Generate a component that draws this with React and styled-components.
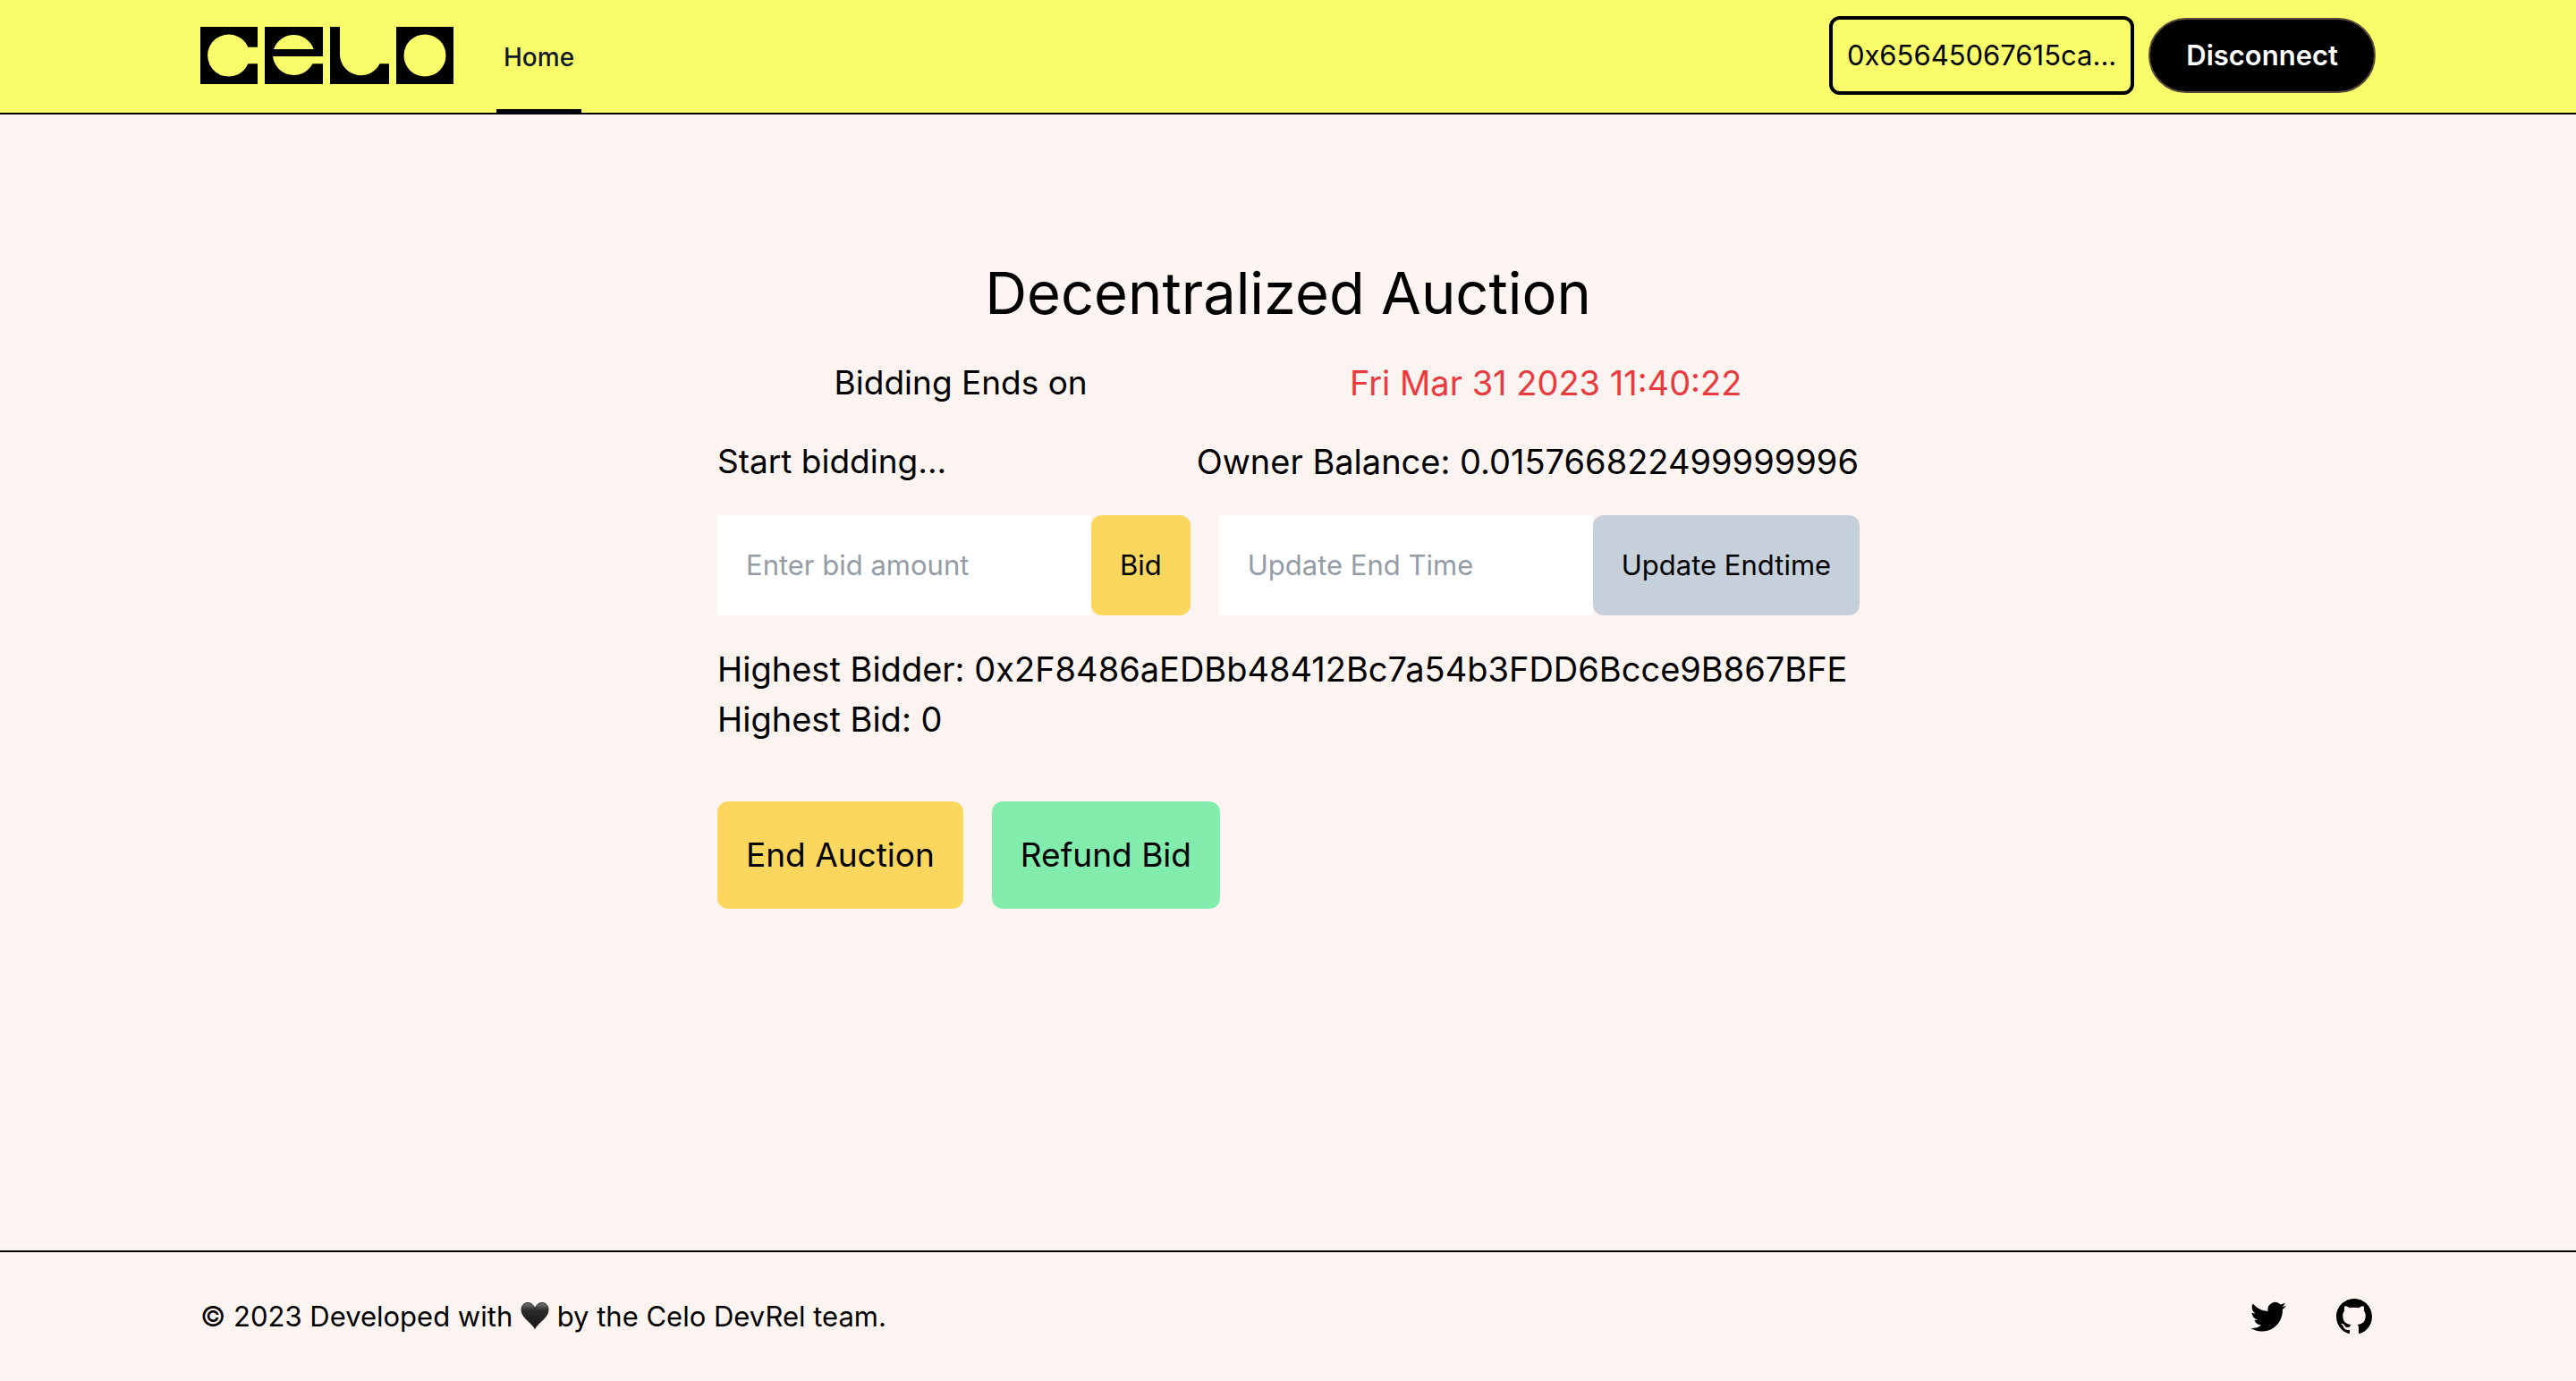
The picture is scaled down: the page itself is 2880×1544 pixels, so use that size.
import React from "react";
import styled, { createGlobalStyle } from "styled-components";

const GlobalStyle = createGlobalStyle`
  *, *::before, *::after { box-sizing: border-box; }
  body {
    margin: 0;
    background: #fcf4f1;
    color: #000;
    font-family: Inter, "Liberation Sans", sans-serif;
    font-size: 31px;
    line-height: 48px;
  }
  h1, p { margin: 0; font-weight: 400; }
  button, input { font: inherit; color: inherit; border: 0; }
  button { cursor: pointer; }
`;

const Page = styled.div`
  display: flex;
  flex-direction: column;
  min-height: 100vh;
`;

const Header = styled.header`
  background: #fafd6a;
  border-bottom: 2px solid #000;
`;

const Container = styled.div`
  display: flex;
  align-items: center;
  justify-content: space-between;
  max-width: 2560px;
  margin: 0 auto;
  padding: ${(p) => p.$padY || 0}px 64px;
`;

const Bar = styled(Container)`
  min-height: 126px;
  padding-bottom: 2px;
`;

const Nav = styled.nav`
  display: flex;
  align-self: stretch;
  align-items: center;
  gap: 48px;
`;

const LogoSvg = styled.svg`
  display: block;
  width: 283px;
  height: 64px;
`;

const NavLink = styled.a`
  display: flex;
  align-items: center;
  align-self: stretch;
  margin-bottom: -4px;
  padding: 6px 8px 0;
  border-bottom: 6px solid #000;
  color: #111827;
  font-size: 28px;
  font-weight: 500;
  line-height: 40px;
  text-decoration: none;
`;

const Wallet = styled.div`
  display: flex;
  align-items: center;
  gap: 16px;
`;

const Address = styled.p`
  padding: 16px;
  border: 4px solid #000;
  border-radius: 12px;
`;

const Disconnect = styled.button`
  padding: 16px 40px;
  border: 2px solid #5b4b3f;
  border-radius: 42px;
  background: #000;
  color: #fff;
  font-weight: 600;
`;

const Main = styled.main`
  flex: 1;
  padding: 160px 64px;
`;

const Auction = styled.section`
  display: flex;
  flex-direction: column;
  gap: 32px;
  max-width: 1276px;
  margin: 0 auto;
  font-size: 37px;
  line-height: 56px;
`;

const Title = styled.h1`
  font-size: 65px;
  line-height: 80px;
  text-align: center;
`;

const Row = styled.div`
  display: flex;
  gap: 32px;
  justify-content: ${(p) => p.$justify || "flex-start"};
`;

const Figure = styled.p`
  color: ${(p) => p.$color || "inherit"};
  font-size: 38px;
`;

const Field = styled.form`
  display: flex;
  flex: 1 1 auto;
  font-size: 31px;
  line-height: 48px;
`;

const Input = styled.input`
  flex: 1 1 auto;
  width: 418px;
  min-width: 0;
  padding: 32px;
  background: #fff;
  border-radius: 0;
  &::placeholder { color: #949ca6; opacity: 1; }
`;

const Button = styled.button`
  padding: 32px;
  border-radius: 12px;
  background: ${(p) => p.$color};
  white-space: nowrap;
`;

const Actions = styled(Row)`
  padding-top: 32px;
`;

const Footer = styled.footer`
  border-top: 2px solid #000;
`;

const Heart = styled.svg`
  display: inline-block;
  width: 32px;
  height: 32px;
  vertical-align: -4px;
`;

const Social = styled.div`
  display: flex;
  gap: 48px;
`;

const SocialLink = styled.a`
  display: block;
  height: 48px;
  color: #000;
  svg { display: block; width: 48px; height: 48px; fill: currentColor; }
`;

function Logo() {
  return (
    <LogoSvg viewBox="0 0 283 64" role="img" aria-label="Celo">
      <path d="M0 0H64V22.7H53.4A23.6 23.6 0 1 0 53.4 41.3H64V64H0Z" />
      <path
        fillRule="evenodd"
        d="M72 0H137V33H81A23.6 23.6 0 0 0 125.4 41.3H137V64H72ZM82 25H126.7A23.6 23.6 0 0 0 82 25Z"
      />
      <path d="M145 0H156V32A23.6 23.6 0 0 0 200.6 41.3H211V64H145Z" />
      <path
        fillRule="evenodd"
        d="M219 0H283V64H219ZM251 8.4A23.5 23.6 0 1 0 251 55.6A23.5 23.6 0 1 0 251 8.4Z"
      />
    </LogoSvg>
  );
}

export default function App() {
  return (
    <Page>
      <GlobalStyle />
      <Header>
        <Bar>
          <Nav>
            <Logo />
            <NavLink href="#">Home</NavLink>
          </Nav>
          <Wallet>
            <Address>0x65645067615ca...</Address>
            <Disconnect type="button">Disconnect</Disconnect>
          </Wallet>
        </Bar>
      </Header>
      <Main>
        <Auction>
          <Title>Decentralized Auction</Title>
          <Row $justify="space-around">
            <p>Bidding Ends on</p>
            <Figure $color="#e93a40">Fri Mar 31 2023 11:40:22</Figure>
          </Row>
          <Row $justify="space-between">
            <p>Start bidding...</p>
            <Figure>Owner Balance: 0.015766822499999996</Figure>
          </Row>
          <Row>
            <Field onSubmit={(e) => e.preventDefault()}>
              <Input type="text" placeholder="Enter bid amount" aria-label="Enter bid amount" />
              <Button $color="#fbd75e">Bid</Button>
            </Field>
            <Field onSubmit={(e) => e.preventDefault()}>
              <Input type="text" placeholder="Update End Time" aria-label="Update End Time" />
              <Button $color="#c6d0da">Update Endtime</Button>
            </Field>
          </Row>
          <div>
            <Figure>Highest Bidder: 0x2F8486aEDBb48412Bc7a54b3FDD6Bcce9B867BFE</Figure>
            <Figure>Highest Bid: 0</Figure>
          </div>
          <Actions>
            <Button type="button" $color="#fbd75e">End Auction</Button>
            <Button type="button" $color="#82ecac">Refund Bid</Button>
          </Actions>
        </Auction>
      </Main>
      <Footer>
        <Container $padY={48}>
          <p>
            © 2023 Developed with{" "}
            <Heart viewBox="0 0 32 32" role="img" aria-label="love">
              <defs>
                <linearGradient id="heartShade" x1="0" y1="0" x2="0" y2="1">
                  <stop offset="0" stopColor="#777" />
                  <stop offset="0.3" stopColor="#2b2b2b" />
                  <stop offset="1" stopColor="#151515" />
                </linearGradient>
              </defs>
              <path
                fill="url(#heartShade)"
                stroke="#222"
                d="M16 30.5C13.500 24.500 1 18.500 1 9.500C1 4.500 4 1.500 8 1.500C12 1.500 15 4.500 16 8.500C17 4.500 20 1.500 24 1.500C28 1.500 31 4.500 31 9.500C31 18.500 18.500 24.500 16 30.500Z"
              />
            </Heart>{" "}
            by the Celo DevRel team.
          </p>
          <Social>
            <SocialLink href="#" aria-label="Twitter">
              <svg viewBox="0 0 24 24" aria-hidden="true">
                <path d="M8.29 20.251c7.547 0 11.675-6.253 11.675-11.675 0-.178 0-.355-.012-.53A8.348 8.348 0 0022 5.92a8.19 8.19 0 01-2.357.646 4.118 4.118 0 001.804-2.27 8.224 8.224 0 01-2.605.996 4.107 4.107 0 00-6.993 3.743 11.65 11.65 0 01-8.457-4.287 4.106 4.106 0 001.27 5.477A4.072 4.072 0 012.8 9.713v.052a4.105 4.105 0 003.292 4.022 4.095 4.095 0 01-1.853.07 4.108 4.108 0 003.834 2.85A8.233 8.233 0 012 18.407a11.616 11.616 0 006.29 1.84" />
              </svg>
            </SocialLink>
            <SocialLink href="#" aria-label="GitHub">
              <svg viewBox="0 0 24 24" aria-hidden="true">
                <path
                  fillRule="evenodd"
                  clipRule="evenodd"
                  d="M12 2C6.477 2 2 6.484 2 12.017c0 4.425 2.865 8.18 6.839 9.504.5.092.682-.217.682-.483 0-.237-.008-.868-.013-1.703-2.782.605-3.369-1.343-3.369-1.343-.454-1.158-1.11-1.466-1.11-1.466-.908-.62.069-.608.069-.608 1.003.07 1.531 1.032 1.531 1.032.892 1.53 2.341 1.088 2.91.832.092-.647.35-1.088.636-1.338-2.22-.253-4.555-1.113-4.555-4.951 0-1.093.39-1.988 1.029-2.688-.103-.253-.446-1.272.098-2.65 0 0 .84-.27 2.75 1.026A9.564 9.564 0 0112 6.844c.85.004 1.705.115 2.504.337 1.909-1.296 2.747-1.027 2.747-1.027.546 1.379.202 2.398.1 2.651.64.7 1.028 1.595 1.028 2.688 0 3.848-2.339 4.695-4.566 4.943.359.309.678.92.678 1.855 0 1.338-.012 2.419-.012 2.747 0 .268.18.58.688.482A10.019 10.019 0 0022 12.017C22 6.484 17.522 2 12 2z"
                />
              </svg>
            </SocialLink>
          </Social>
        </Container>
      </Footer>
    </Page>
  );
}
